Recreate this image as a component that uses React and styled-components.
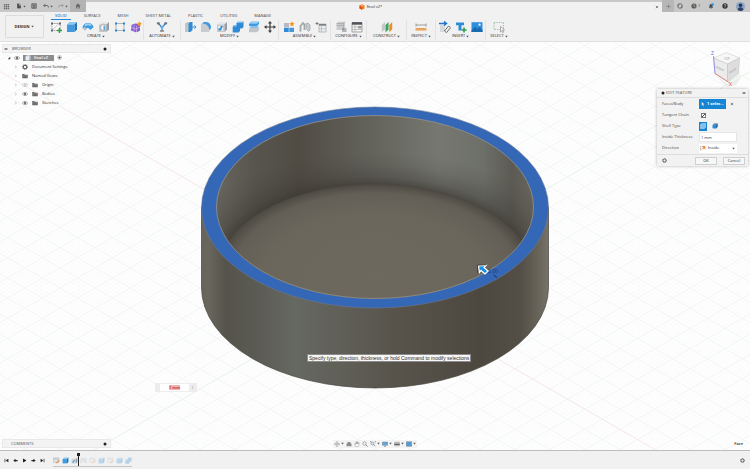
import React from 'react'
import styled, { createGlobalStyle } from 'styled-components'

const GlobalStyle = createGlobalStyle`
    * {
        box-sizing: border-box;
    }
    body {
        margin: 0;
        background: #f1f1f1;
    }
    body, button, input, select {
        font-family: "Open Sans", "Noto Sans", sans-serif;
        font-size: 4px;
        line-height: 6px;
        color: #2c2c2c;
    }
    button {
        border: 0;
        padding: 0;
        background: none;
    }
    a {
        color: inherit;
        text-decoration: none;
    }
`

/* Icons, all of them on a 12 x 12 grid */

const cubeFaces = (front, top, side) => (
    <>
        <path d="M1 3.5 3.5 1H11L8.5 3.5Z" fill={top} />
        <path d="M1 3.5H8.5V11H1Z" fill={front} />
        <path d="M8.5 3.5 11 1V8.5L8.5 11Z" fill={side} />
    </>
)
const blueCube = cubeFaces('#3f9ae0', '#8cc8f2', '#1f74ba')
const greyCube = cubeFaces('#c6cacd', '#e4e6e8', '#979da2')

const icons = {
    apps: <path d="M1.5 1.5h2.4v2.4H1.5zM4.8 1.5h2.4v2.4H4.8zM8.1 1.5h2.4v2.4H8.1zM1.5 4.8h2.4v2.4H1.5zM4.8 4.8h2.4v2.4H4.8zM8.1 4.8h2.4v2.4H8.1zM1.5 8.1h2.4v2.4H1.5zM4.8 8.1h2.4v2.4H4.8zM8.1 8.1h2.4v2.4H8.1z" fill="#6b6b6b" />,
    file: <path d="M2 1h5l3 3v7H2ZM6.5 2v3h3" fill="#4e4e4e" stroke="#ddd" strokeWidth=".4" />,
    save: <path d="M1.5 1.5h9v9h-9ZM4 1.5v3.5h4V1.5M4 10.5V7.5h4v3" fill="#aaa" stroke="#555" strokeWidth="1.5" />,
    undo: <path d="M4.5 2 1.5 5l3 3M1.5 5H8q3 0 3 4" fill="none" stroke="#555" strokeWidth="1.6" />,
    redo: <path d="M7.5 2l3 3-3 3M10.5 5H4Q1 5 1 9" fill="none" stroke="#929292" strokeWidth="1.5" />,
    home: <path d="M6 1 .8 6h1.6v5h2.4V7.5h2.4V11h2.4V6h1.6Z" fill="#666" />,
    model: <><path d="M6 .5 11 3v6L6 11.5 1 9V3Z" fill="#f27a1f" /><path d="M6 6v5.5L1 9V3Z" fill="#e04f15" /><path d="M3.5 3.5 6 2.5l2.5 1L6 5Z" fill="#ffd8b0" /></>,
    close: <path d="m2.5 2.5 7 7m0-7-7 7" stroke="#444" strokeWidth="1.7" />,
    plus: <path d="M6 1v10M1 6h10" stroke="#777" strokeWidth="1.6" />,
    refresh: <><circle cx="6" cy="6" r="4.5" fill="none" stroke="#505050" strokeWidth="1.5" /><path d="M.5 4.5h3v-3M8.5 10.5v-3h3" fill="none" stroke="#505050" /></>,
    clock: <><circle cx="6" cy="6" r="5.2" fill="#606060" /><path d="M6 2.5V6l2.5 2" fill="none" stroke="#ddd" /></>,
    bell: <><path d="M1.5 9.5 3 7.5V5q0-3 3-3t3 3v2.5l1.5 2ZM4.5 10h3l-1.5 1.5Z" fill="#474747" /><circle cx="9" cy="3" r="2.6" fill="#2391e6" /></>,
    help: <><circle cx="6" cy="6" r="5.3" fill="#333" /><path d="M4.2 4.6Q4.4 3 6 3t1.8 1.5Q7.8 5.500 6 6.3v1M6 8.3v1.2" fill="none" stroke="#eee" strokeWidth="1.2" /></>,
    avatar: <><circle cx="6" cy="6" r="6" fill="#8aa4c8" /><circle cx="6" cy="4.3" r="2.4" fill="#25344d" /><path d="M2.2 10.6Q2.5 7 6 7t3.8 3.6Q6 13.2 2.2 10.6Z" fill="#2c4165" /></>,
    sketch: <><path d="M2 2.5h8v7H2Z" fill="#fafafa" stroke="#777" strokeWidth=".7" strokeDasharray="1.5 .7" /><path d="m2 9.5 7-7" stroke="#999" strokeWidth=".6" /><path d="M1 1.5h2v2H1zM9 1.5h2v2H9zM1 8.5h2v2H1z" fill="#666" /><path d="M9.5 7v5M7 9.5h5" stroke="#29a33a" strokeWidth="1.5" /></>,
    extrude: blueCube,
    revolve: <><path d="M.5 7Q1 2 6 2t5.5 4.5L8 9Q7.5 6.5 5 7L3 9.5Z" fill="#3f9ae0" /><path d="M2 4Q6 .5 10 4L8 5Q5.5 3.5 4 5.5Z" fill="#9bd0f4" /><path d="M.5 7 3 9.5 4.5 8 3 6Z" fill="#bfc4c8" /></>,
    hole: <>{greyCube}<ellipse cx="5.5" cy="6.5" rx="3" ry="3.3" fill="#f4f4f4" stroke="#777" strokeWidth=".5" /><path d="M5.5 4.2q2 0 2 2.5t-2 2.5z" fill="#5aa8e2" /></>,
    pattern: <><path d="M2 2.5h8v7H2Z" fill="none" stroke="#8a8a8a" strokeWidth=".6" /><path d="M1 1.5h2v2H1zM9 1.5h2v2H9zM1 8.5h2v2H1zM9 8.5h2v2H9z" fill="#2586d4" /></>,
    form: <><path d="M1.500 4Q4 2 6.500 2.500L10 4.500v5Q8 11.500 5.500 11.300L1 9.500Z" fill="#8b5fd0" /><path d="M1 6.5 6 8l4-1.800M4 3.500v7M6.5 5v6" fill="none" stroke="#d9c4f5" strokeWidth=".6" /><path d="m9.5 0 .7 1.7 1.8.3-1.3 1.2.3 1.8-1.5-1L8 5l.2-1.8L7 2l1.8-.3Z" fill="#f69a22" /></>,
    automate: <><path d="M2.5 2.5 6 6.5l3.5-4M6 6.5V10" fill="none" stroke="#3b82c0" strokeWidth="1.2" /><path d="M4 10h4" stroke="#7b8790" strokeWidth="1.5" /><circle cx="2.300" cy="2.3" r="1.400" fill="#6c7a86" /><circle cx="9.7" cy="2.3" r="1.4" fill="#6c7a86" /><circle cx="6" cy="6.3" r="1.3" fill="#5bb1ee" /></>,
    pressPull: <><path d="M1 2.5 3.5 1H6v10H1Z" fill="#c1c5c8" /><path d="M4.5 2.5 6.5 1H8.5v8L6.5 11h-2Z" fill="#2f8bd6" /><path d="M8 6h4m-1.5-1.7L12 6l-1.5 1.7" fill="none" stroke="#2f8bd6" strokeWidth=".9" /></>,
    fillet: <><path d="M1 3 3.5 1H6q5 .5 5 6l-2 4H1Z" fill="#c8ccd0" /><path d="M2.5 2.5 4 1h2q5 .5 5 6L9.2 9Q9 3 2.5 2.5Z" fill="#3f9ae0" /></>,
    shell: <>{greyCube}<path d="M2.5 5H7v4.5H2.5Z" fill="#f5f5f5" /><path d="M2.5 9.5V7.3h2V5H7L5 9.5Z" fill="#2f8bd6" /></>,
    combine: <><path d="M4.5 2 6 .7h5.5V6L10 7.5H8v2.5L6.5 11.5H.7V5.5L2 4.3h2.5Z" fill="#2f8bd6" /><path d="M4.5 2 6 .7h5.5L10 2ZM.7 5.5 2 4.3h2.5v1.2Z" fill="#84c3f1" /></>,
    split: <><path d="M1 2.8 3 .8h8v2.200L9 5H1Z" fill="#3f9ae0" /><path d="M1 2.8 3 .8h8L9 2.8Z" fill="#93ccf4" /><path d="M1 8 3 6.500h8V9L9 11.3H1Z" fill="#c0c5c9" /><path d="m1 6.8 2-1.500h8L9 6.800Z" fill="#6db4e9" /></>,
    move: <path d="M6 0 8 2.5H6.6v2.9h2.9V4L12 6 9.5 8V6.6H6.6v2.9H8L6 12 4 9.5h1.4V6.6H2.5V8L0 6l2.5-2v1.4h2.9V2.5H4Z" fill="#3f3f3f" />,
    component: <><path d="M1 2h5v4.500H1z" fill="#b4bac0" /><path d="M1 6.500h5V11H1z" fill="#2f8bd6" /><path d="M6 6.500h5V11H6z" fill="#4797d8" /><path d="M6 6.500V11M1 6.500h10" stroke="#d8ebf8" strokeWidth=".6" /><path d="m9 .3.8 1.7 1.9.3-1.4 1.2.3 1.8-1.6-.9-1.6.9.3-1.8-1.4-1.2 1.9-.3Z" fill="#f68f1e" /></>,
    joint: <><path d="M1.500 10.5V5L4 2l1.500 1.500V9" fill="none" stroke="#a1a7ab" strokeWidth="1.8" /><path d="M7 2.500V7l2.500 3.500L11 9V4L9 2Z" fill="#c4c8cb" stroke="#a4a9ad" strokeWidth=".8" /></>,
    align: <><path d="M.5 2.5h3M2 1v3" stroke="#666" strokeWidth=".8" /><path d="M4 3h7v8H4Z" fill="#eceeef" stroke="#999" strokeWidth=".6" /><path d="M4 3h7v1.7H4z" fill="#7a8288" /><path d="M6.5 5v6M4 7.8h7" stroke="#aaa" strokeWidth=".6" /></>,
    configure: <><path d="M1.5 2.500 3 .7h7V7L8.500 9h-7Z" fill="#c8ccce" /><path d="M1.5 4.500h7M8.500 2.500V9M1.500 2.500h7L10 .7" fill="none" stroke="#9a9fa3" strokeWidth=".6" /><path d="M7 8h4.5M7 10h4.5" stroke="#737a80" /></>,
    table: <><path d="M1 1.5h10v9.5H1Z" fill="#f3f3f3" stroke="#858585" strokeWidth=".7" /><path d="M1 1.2h10v2.5H1z" fill="#505458" /><path d="M1 6h10M1 8.5h10M4 4v7" stroke="#a5a5a5" strokeWidth=".6" /><path d="M7 5h3.5v2.5H7z" fill="#9a9fa3" /></>,
    construct: <><path d="M.8 4 4 1v7.5L.8 11Z" fill="#c3c7ca" /><path d="M4.5 4 7.5 1v7.5l-3 3Z" fill="#3aa35a" /><path d="m8.2 4 3-3v7.5l-3 2.8Z" fill="#ef8f2d" /></>,
    inspect: <><path d="M1 2.500v3M11 2.500v3M1 4h10" stroke="#8a8a8a" strokeWidth=".8" /><path d="M.5 7h11v2.600H.5z" fill="#eeaa65" /><path d="M2.5 7v1.200M4.5 7v1.200M6.5 7v1.200M8.5 7v1.200" stroke="#b7712b" strokeWidth=".4" /></>,
    insert: <><path d="M1 4h5v7H1Z" fill="#d6d9db" /><path d="M0 2.5h7M5 .5l2.5 2L5 4.5" fill="none" stroke="#2378c8" strokeWidth="1.5" /><path d="m5.5 10 4-5 2 1.7-4 5Z" fill="none" stroke="#6c7074" strokeWidth="1" /></>,
    insertMesh: <><path d="M1 1.5h8v2.7H6.5V9.5h-3V4.2H1Z" fill="#2f8bd6" /><path d="M9 6.5v5M6.5 9h5" stroke="#28a049" strokeWidth="1.6" /></>,
    image: <><path d="M.5 1.2h11v9.8H.5Z" fill="#2f8fdd" /><path d="m.5 9.5 3.5-4 2.5 2.5L8.5 6l3 3v2H.5Z" fill="#1a6bb0" /><circle cx="8.6" cy="3.7" r="1.1" fill="#fff" /></>,
    select: <><path d="M1 1.5h9.500v7H1Z" fill="none" stroke="#8fbfa0" strokeWidth=".9" strokeDasharray="1.4 1" /><path d="m7.5 5.5 4 3.5-1.8.2.9 2-1 .4-.8-2-1.3 1.2Z" fill="#fff" stroke="#777" strokeWidth=".6" /></>,
    collapse: <path d="M1 6h10M4 3.5v5M8 3.5v5" stroke="#555" strokeWidth="2" />,
    dot: <circle cx="6" cy="6" r="4.5" fill="#222" />,
    open: <path d="M9.5 2.5v7h-7Z" fill="#333" />,
    closed: <path d="m4 2.5 4.5 3.5L4 9.5Z" fill="#fff" stroke="#aaa" strokeWidth="1.1" />,
    eye: <><path d="M.5 6Q6-.5 11.5 6 6 12.5.5 6Z" fill="#fff" stroke="#6d6d6d" strokeWidth="1.2" /><circle cx="6" cy="6" r="2.2" fill="#555" /></>,
    eyeOff: <><path d="M.5 6Q6-.5 11.5 6 6 12.5.5 6Z" fill="#fff" stroke="#aaa" strokeWidth="1.2" /><circle cx="6" cy="6" r="1.8" fill="#bbb" /></>,
    folder: <><path d="M.5 2h4l1 1.5h6V10.5H.5Z" fill="#666" /><path d="M.5 5h11M3.5 5v5.5M8.5 5v5.5" stroke="#aaa" strokeWidth=".6" /></>,
    gear: <><circle cx="6" cy="6" r="3.6" fill="none" stroke="#555" strokeWidth="2.2" /><circle cx="6" cy="6" r="5" fill="none" stroke="#555" strokeWidth="1.5" strokeDasharray="2 1.93" /></>,
    part: cubeFaces('#e9edf2', '#fff', '#c4d2e2'),
    target: <><circle cx="6" cy="6" r="5" fill="#fff" stroke="#888" /><circle cx="6" cy="6" r="2.7" fill="#444" /></>,
    cursor: <path d="m3 1 6.5 6-2.5.2 1.5 3-1.5.8-1.5-3L3 10Z" fill="#e6f4ff" stroke="#174f7a" strokeWidth=".6" />,
    shellSharp: <><path d="M1 3.5 3.5 1H11v7.5L8.5 11H1Z" fill="#4fa9e6" stroke="#fff" strokeWidth=".8" /><path d="M1 3.5h7.5V11M8.5 3.5 11 1M3 5.5h3.5V9H3Z" fill="none" stroke="#fff" strokeWidth=".7" /></>,
    shellRound: <><path d="M1 5q0-2 2-3l1-1h7v6.5L8.5 11H3q-2 0-2-2Z" fill="#2f8bd6" /><path d="M4 1h7L9 3.5H2Z" fill="#7e9db7" /><path d="M8.5 3.5 11 1v6.5L8.5 11Z" fill="#245c8d" /></>,
    direction: <><path d="M1 11V3h2" fill="none" stroke="#777" strokeWidth=".9" /><path d="m1.5 10.5 5-5M4 2.5l6 .2.5 6-2.2-2.5-2.3 2-.8-.8 2.2-2Z" fill="#ee8030" stroke="#ee8030" strokeWidth=".9" /></>,
    orbit: <path d="M6 1v10M1 6h10M4 3l2-2 2 2M4 9l2 2 2-2M3 4 1 6l2 2M9 4l2 2-2 2" fill="none" stroke="#777" strokeWidth=".9" />,
    look: <path d="M3 2h6v3h2v5.500H1V5h2Z" fill="#8c8c8c" />,
    hand: <path d="M3 11 1 6.5l1-.5 1.5 1.5V2.5h1.2V6l.4-4.5h1.2V6l.7-4h1.1l-.3 4.3L9.3 3.5h1L9.5 9 8.5 11Z" fill="#fff" stroke="#777" strokeWidth=".7" />,
    zoom: <><circle cx="5" cy="5" r="3.3" fill="#f1f6fb" stroke="#666" /><path d="m7.5 7.5 3.5 3.5" stroke="#666" strokeWidth="1.5" /></>,
    zoomFit: <><circle cx="5" cy="5" r="3" fill="#d7e9f8" stroke="#666" /><path d="m7.5 7.5 3 3M.5 2.5v-2h2M10 .5h1.5V3" fill="none" stroke="#666" strokeWidth="1.2" /></>,
    display: <><path d="M.5 2h11v6.5H.5Z" fill="#62a8dd" stroke="#6c7780" strokeWidth=".8" /><path d="M4 10.5h4" stroke="#777" strokeWidth="1.5" /></>,
    layout: <><path d="M.5 1.5h11v9H.5Z" fill="#bbb" /><path d="M.5 5.5h11v2.5H.5Z" fill="#666" /></>,
    viewports: <path d="M.5 1.5h11v9H.5Z" fill="#5b9bd3" stroke="#5e7488" strokeWidth=".8" />,
    toStart: <path d="M10.5 2v8L4 6ZM1.5 2h1.6v8H1.5Z" fill="#222" />,
    stepBack: <path d="M6 2v8L.8 6ZM6 4.5h5v3H6Z" fill="#222" />,
    play: <path d="m2.5 1 8 5-8 5Z" fill="#111" />,
    stepOn: <path d="M6 2v8l5.2-4ZM1 4.5h5v3H1Z" fill="#222" />,
    toEnd: <path d="M1.5 2v8L8 6ZM8.9 2h1.6v8H8.9Z" fill="#222" />,
    tlSketch: <><path d="M1 1.5h9v8H1Z" fill="#e4e4e4" stroke="#999" strokeWidth=".6" /><path d="M1.5 3.5h8" stroke="#8dbbdf" strokeWidth="1.2" /><path d="m5 10 5-5.5 1.5 1.3-5 5.5Z" fill="#ef8d3d" /></>,
}

const Glyph = styled.svg`
    display: block;
    flex: none;
    width: ${({ $size }) => $size}px;
    height: ${({ $size }) => $size}px;
    opacity: ${({ $faded }) => ($faded ? 0.3 : 1)};
`

const Icon = ({ name, size = 6, faded }) => (
    <Glyph viewBox="0 0 12 12" $size={size} $faded={faded} aria-hidden="true">
        {icons[name]}
    </Glyph>
)

const Caret = () => (
    <Glyph viewBox="0 0 12 12" $size={3} aria-hidden="true">
        <path d="M1 3h10L6 10Z" fill="#555" />
    </Glyph>
)

/* Title bar */

const TitleBar = () => (
    <TitleWrapper>
        <QuickAccess>
            <IconButton aria-label="Data panel"><Icon name="apps" size={7} /></IconButton>
            <IconButton aria-label="File"><Icon name="file" /><Caret /></IconButton>
            <IconButton aria-label="Save"><Icon name="save" /></IconButton>
            <IconButton aria-label="Undo"><Icon name="undo" /><Caret /></IconButton>
            <IconButton aria-label="Redo"><Icon name="redo" /><Caret /></IconButton>
        </QuickAccess>
        <HomeTab aria-label="Home"><Icon name="home" /></HomeTab>
        <DocumentTab>
            <DocumentName><Icon name="model" />final v2*</DocumentName>
            <IconButton aria-label="Close"><Icon name="close" size={4} /></IconButton>
        </DocumentTab>
        <NewTab aria-label="New design"><Icon name="plus" size={5} /></NewTab>
        <Account>
            <IconButton aria-label="Extensions"><Icon name="refresh" /></IconButton>
            <IconButton aria-label="Job status"><Icon name="clock" />1</IconButton>
            <IconButton aria-label="Notifications"><Icon name="bell" /></IconButton>
            <IconButton aria-label="Help"><Icon name="help" /></IconButton>
            <IconButton aria-label="Profile"><Icon name="avatar" size={9} /></IconButton>
        </Account>
    </TitleWrapper>
)

/* Toolbar */

const tabs = ['SOLID', 'SURFACE', 'MESH', 'SHEET METAL', 'PLASTIC', 'UTILITIES', 'MANAGE']

const groups = [
    { label: 'CREATE', width: 94, tools: ['sketch', 'extrude', 'revolve', 'hole', 'pattern', 'form'] },
    { label: 'AUTOMATE', width: 37, tools: ['automate'] },
    { label: 'MODIFY', width: 98, tools: ['pressPull', 'fillet', 'shell', 'combine', 'split', 'move'] },
    { label: 'ASSEMBLE', width: 52, tools: ['component', 'joint', 'align'] },
    { label: 'CONFIGURE', width: 36, tools: ['configure', 'table'] },
    { label: 'CONSTRUCT', width: 40, tools: ['construct'] },
    { label: 'INSPECT', width: 29, tools: ['inspect'] },
    { label: 'INSERT', width: 50, tools: ['insert', 'insertMesh', 'image'] },
    { label: 'SELECT', width: 27, tools: ['select'] },
]

const Toolbar = () => (
    <ToolbarWrapper>
        <WorkspaceButton>DESIGN<Caret /></WorkspaceButton>
        <div>
            <Tabs>
                {tabs.map((tab, index) => (
                    <Tab key={tab} href="#" $active={index === 0}>{tab}</Tab>
                ))}
            </Tabs>
            <Groups>
                {groups.map((group) => (
                    <Group key={group.label} $width={group.width}>
                        <Tools>
                            {group.tools.map((tool) => (
                                <IconButton key={tool} aria-label={tool}><Icon name={tool} size={12} /></IconButton>
                            ))}
                        </Tools>
                        <GroupLabel>{group.label}<Caret /></GroupLabel>
                    </Group>
                ))}
            </Groups>
        </div>
    </ToolbarWrapper>
)

/* Canvas */

const Scene = () => (
    <SceneSvg viewBox="0 42 750 408" preserveAspectRatio="xMidYMin slice" aria-hidden="true">
        <defs>
            <pattern id="minor" x="375" y="288" width="7" height="4.04" patternUnits="userSpaceOnUse">
                <path d="M0 0 7 4.04M0 4.04 7 0" stroke="#f7f8f8" strokeWidth=".4" />
            </pattern>
            <pattern id="major" x="375" y="288" width="35" height="20.2" patternUnits="userSpaceOnUse">
                <path d="M0 0 35 20.2M0 20.2 35 0" stroke="#f0f1f1" strokeWidth=".7" />
            </pattern>
            <linearGradient id="outer">
                <stop offset="0" stopColor="#67645b" />
                <stop offset=".02" stopColor="#69665d" />
                <stop offset=".07" stopColor="#55534b" />
                <stop offset=".16" stopColor="#5b5b54" />
                <stop offset=".27" stopColor="#666862" />
                <stop offset=".4" stopColor="#605f58" />
                <stop offset=".55" stopColor="#58544c" />
                <stop offset=".8" stopColor="#4d483f" />
                <stop offset=".92" stopColor="#544f46" />
                <stop offset=".98" stopColor="#6c685e" />
                <stop offset="1" stopColor="#77736a" />
            </linearGradient>
            <linearGradient id="inner">
                <stop offset="0" stopColor="#67665e" />
                <stop offset=".12" stopColor="#57554e" />
                <stop offset=".26" stopColor="#504c44" />
                <stop offset=".45" stopColor="#605f58" />
                <stop offset=".7" stopColor="#767870" />
                <stop offset=".84" stopColor="#6d6f69" />
                <stop offset=".93" stopColor="#5c5b53" />
                <stop offset="1" stopColor="#67645b" />
            </linearGradient>
            <radialGradient id="innerShade">
                <stop offset=".74" stopColor="#38352f" stopOpacity=".65" />
                <stop offset=".8" stopColor="#38352f" stopOpacity=".35" />
                <stop offset=".9" stopColor="#38352f" stopOpacity=".12" />
                <stop offset="1" stopColor="#38352f" stopOpacity="0" />
            </radialGradient>
            <radialGradient id="floor">
                <stop offset="0" stopColor="#6e695f" />
                <stop offset=".7" stopColor="#6b665c" />
                <stop offset=".9" stopColor="#635f56" />
                <stop offset="1" stopColor="#4d4a43" />
            </radialGradient>
            <clipPath id="opening">
                <ellipse cx="375" cy="207" rx="158.5" ry="91.5" />
            </clipPath>
        </defs>
        <rect y="42" width="750" height="408" fill="#fefefe" />
        <rect y="42" width="750" height="408" fill="url(#minor)" />
        <rect y="42" width="750" height="408" fill="url(#major)" />
        <path d="M-30 54.2 660 452.5" stroke="#fbe4e4" strokeWidth=".8" />
        <path d="M90 452.5 801 42" stroke="#e6f5e6" strokeWidth=".8" />
        <path d="M201.5 207.5V287.5A173.5 100.5 0 0 0 548.5 287.5V207.5Z" fill="url(#outer)" stroke="#45423b" strokeWidth=".7" />
        <ellipse cx="375" cy="207.5" rx="173.5" ry="100.5" fill="#3467b5" stroke="#6c7892" strokeWidth=".6" />
        <g clipPath="url(#opening)">
            <rect x="216" y="115" width="318" height="184" fill="url(#inner)" />
            <ellipse cx="375" cy="275.5" rx="214" ry="123.5" fill="url(#innerShade)" />
            <ellipse cx="375" cy="275.5" rx="158.5" ry="91.5" fill="url(#floor)" stroke="#4a4740" strokeWidth=".4" />
        </g>
        <ellipse cx="375" cy="207" rx="158.5" ry="91.5" fill="none" stroke="#a39a88" strokeWidth=".7" />
        <text x="488" y="273" fontSize="5" fill="#1c3c78">2.00</text>
        <path d="m493.5 275 3.5 2.5" stroke="#152f61" strokeWidth="1" />
        <path d="m478.500 266 7.500-.5-2 2 4 3.500-3 3-4-3.500-1.500 2Z" fill="#1a8de2" stroke="#fff" strokeWidth="1.2" />
        <path d="M477.500 272.500V265H486" fill="none" stroke="#222" strokeWidth=".5" />
    </SceneSvg>
)

const tree = [
    { label: 'Document Settings', icons: ['gear'] },
    { label: 'Named Views', icons: ['folder'] },
    { label: 'Origin', icons: ['eyeOff', 'folder'] },
    { label: 'Bodies', icons: ['eye', 'folder'] },
    { label: 'Sketches', icons: ['eye', 'folder'] },
]

const Browser = () => (
    <div>
        <PanelBar>
            <Icon name="collapse" size={4} />
            <PanelTitle>BROWSER</PanelTitle>
            <Icon name="dot" size={4} />
        </PanelBar>
        <TreeRow $root>
            <Icon name="open" size={4} />
            <Icon name="eye" />
            <RootLabel><Icon name="part" />final v2</RootLabel>
            <Icon name="target" size={5} />
        </TreeRow>
        {tree.map((item) => (
            <TreeRow key={item.label}>
                <Icon name="closed" size={4} />
                {item.icons.map((icon) => <Icon key={icon} name={icon} />)}
                <span>{item.label}</span>
            </TreeRow>
        ))}
    </div>
)

const ViewCube = () => (
    <CubeSvg viewBox="706 48 40 40" role="img" aria-label="View cube">
        <path d="m715 75 13 9 14-8-6 9-9 2Z" fill="#ededed" />
        <path d="m713.5 58 13-5.5 13 5.5-12 6Z" fill="#f7f7f7" stroke="#ccc" strokeWidth=".6" />
        <path d="m713.5 58 14 6v17.5L715 73.5Z" fill="#ececec" stroke="#c5c5c5" strokeWidth=".6" />
        <path d="m727.5 64 12-6-1 15.5-11 8Z" fill="#dedede" stroke="#c5c5c5" strokeWidth=".6" />
        <path d="M713.5 56 715 73.5" stroke="#8482e8" strokeWidth=".8" />
        <path d="m715 73.5 14 9" stroke="#e26b6b" strokeWidth=".8" />
        <path d="m728 82 12-7" stroke="#b6e0b6" strokeWidth=".6" />
        <text x="711" y="55" fontSize="5" fill="#5b5be6">Z</text>
        <text x="729" y="86" fontSize="5" fill="#ee4444">X</text>
        <text transform="matrix(.9 .38 0 1 715.5 68)" fontSize="3" fill="#888">FRONT</text>
        <text transform="matrix(.85 -.5 0 1 729 74)" fontSize="3" fill="#888">RIGHT</text>
        <text x="724" y="60" fontSize="3" fill="#999">TOP</text>
    </CubeSvg>
)

const EditFeature = () => {
    const [tangent, setTangent] = React.useState(true)
    const [shellType, setShellType] = React.useState('shellSharp')
    const [thickness, setThickness] = React.useState('1 mm')
    const [direction, setDirection] = React.useState('Inside')

    return (
        <Dialog aria-label="Edit feature">
            <DialogHeader>
                <Icon name="dot" size={4} />
                <PanelTitle>EDIT FEATURE</PanelTitle>
                <Icon name="collapse" size={4} />
            </DialogHeader>
            <Fields>
                <Field>
                    <FieldLabel>Faces/Body</FieldLabel>
                    <SelectionButton><Icon name="cursor" />1 selec...</SelectionButton>
                    <IconButton aria-label="Clear selection"><Icon name="close" size={4} /></IconButton>
                </Field>
                <Field>
                    <FieldLabel as="label" htmlFor="tangent">Tangent Chain</FieldLabel>
                    <Tick id="tangent" type="checkbox" checked={tangent} onChange={(event) => setTangent(event.target.checked)} />
                </Field>
                <Field role="radiogroup" aria-label="Shell Type">
                    <FieldLabel>Shell Type</FieldLabel>
                    {['shellSharp', 'shellRound'].map((type) => (
                        <ShellOption key={type} $active={type === shellType}>
                            <input
                                type="radio"
                                name="shell"
                                aria-label={type}
                                checked={type === shellType}
                                onChange={() => setShellType(type)}
                            />
                            <Icon name={type} />
                        </ShellOption>
                    ))}
                </Field>
                <Field>
                    <FieldLabel as="label" htmlFor="thickness">Inside Thickness</FieldLabel>
                    <TextBox id="thickness" value={thickness} onChange={(event) => setThickness(event.target.value)} />
                </Field>
                <Field>
                    <FieldLabel as="label" htmlFor="direction">Direction</FieldLabel>
                    <SelectBox>
                        <Icon name="direction" />
                        <select id="direction" value={direction} onChange={(event) => setDirection(event.target.value)}>
                            <option>Inside</option>
                            <option>Outside</option>
                            <option>Both</option>
                        </select>
                        <Caret />
                    </SelectBox>
                </Field>
            </Fields>
            <DialogFooter>
                <IconButton aria-label="Settings"><Icon name="gear" size={5} /></IconButton>
                <DialogButton>OK</DialogButton>
                <DialogButton>Cancel</DialogButton>
            </DialogFooter>
        </Dialog>
    )
}

const navTools = [
    { name: 'orbit', menu: true },
    { name: 'look' },
    { name: 'hand' },
    { name: 'zoom' },
    { name: 'zoomFit', menu: true },
    { name: 'display', menu: true },
    { name: 'layout', menu: true },
    { name: 'viewports', menu: true },
]

const playback = ['toStart', 'stepBack', 'play', 'stepOn', 'toEnd']
const features = ['tlSketch', 'extrude', 'shell', 'joint', 'tlSketch', 'extrude', 'tlSketch', 'extrude', 'combine']

const App = () => (
    <Page>
        <GlobalStyle />
        <TitleBar />
        <Toolbar />
        <Canvas>
            <Scene />
            <CanvasTop>
                <Browser />
                <RightColumn>
                    <ViewCube />
                    <EditFeature />
                </RightColumn>
            </CanvasTop>
            <Hint role="tooltip">Specify type, direction, thickness, or hold Command to modify selections</Hint>
            <Dimension>
                <DimensionInput aria-label="Thickness" defaultValue="1 mm" />
                <IconButton aria-label="More">⁝</IconButton>
            </Dimension>
            <CanvasBottom>
                <PanelBar>
                    <PanelTitle $indent>COMMENTS</PanelTitle>
                    <Icon name="dot" size={4} />
                </PanelBar>
                <NavBar>
                    {navTools.map((tool) => (
                        <IconButton key={tool.name} aria-label={tool.name}>
                            <Icon name={tool.name} />
                            {tool.menu && <Caret />}
                        </IconButton>
                    ))}
                </NavBar>
                <Status>Face</Status>
            </CanvasBottom>
        </Canvas>
        <Timeline>
            <Playback>
                {playback.map((name) => (
                    <IconButton key={name} aria-label={name}><Icon name={name} size={5} /></IconButton>
                ))}
            </Playback>
            <Features>
                {features.map((name, index) => (
                    <Feature key={index} $marker={index === 2}>
                        <Icon name={name} faded={index > 2} size={7} />
                    </Feature>
                ))}
            </Features>
            <IconButton aria-label="Timeline settings"><Icon name="gear" size={5} /></IconButton>
        </Timeline>
    </Page>
)

const Page = styled.div`
    display: flex;
    flex-direction: column;
    min-height: 100vh;
`
const IconButton = styled.button`
    display: flex;
    align-items: center;
    gap: 1px;
    flex: none;
`
const TitleWrapper = styled.header`
    display: flex;
    height: 12px;
    background: #c8c8c8;
`
const QuickAccess = styled.div`
    display: flex;
    align-items: center;
    justify-content: space-between;
    width: 70px;
    padding: 0 2px 0 3px;
`
const HomeTab = styled.button`
    display: flex;
    align-items: center;
    justify-content: center;
    width: 16px;
    background: #b3b3b3;
`
const DocumentTab = styled.div`
    display: flex;
    flex: 1;
    align-items: center;
    margin-top: 2px;
    padding-right: 3px;
    background: #f1f1f1;
`
const DocumentName = styled.div`
    display: flex;
    flex: 1;
    align-items: center;
    justify-content: center;
    gap: 2px;
`
const NewTab = styled.button`
    display: flex;
    align-items: center;
    justify-content: center;
    width: 12px;
    background: #b7b7b7;
`
const Account = styled.div`
    display: flex;
    align-items: center;
    justify-content: space-between;
    width: 76px;
    padding: 0 5px 0 3px;
`
const ToolbarWrapper = styled.div`
    display: flex;
    height: 30px;
    gap: 5px;
    padding-left: 5px;
    background: #f1f1f1;
    border-bottom: 1px solid #e0e0e0;
`
const WorkspaceButton = styled.button`
    display: flex;
    align-items: center;
    justify-content: center;
    gap: 2px;
    width: 39px;
    height: 23px;
    margin-top: 3px;
    border: 1px solid #dcdcdc;
    border-radius: 1px;
    font-weight: 700;
`
const Tabs = styled.nav`
    display: flex;
    gap: 9px;
    height: 8px;
    padding-left: 2px;
`
const Tab = styled.a`
    height: 8px;
    padding: 1px 4px 0;
    border-bottom: 1px solid ${({ $active }) => ($active ? '#1b87d6' : 'transparent')};
    color: ${({ $active }) => ($active ? '#1b87d6' : '#444')};
    font-weight: ${({ $active }) => ($active ? 600 : 400)};
`
const Groups = styled.div`
    display: flex;
`
const Group = styled.div`
    display: flex;
    flex-direction: column;
    align-items: center;
    width: ${({ $width }) => $width}px;
    height: 20px;
    & + & {
        border-left: 1px solid #e2e2e2;
    }
`
const Tools = styled.div`
    display: flex;
    gap: 4px;
    padding-top: 1px;
`
const GroupLabel = styled.button`
    display: flex;
    align-items: center;
    gap: 1px;
`
const Canvas = styled.main`
    position: relative;
    display: flex;
    flex: 1;
    flex-direction: column;
    justify-content: space-between;
    overflow: hidden;
    padding: 2px;
`
const SceneSvg = styled.svg`
    position: absolute;
    inset: 0;
    width: 100%;
    height: 100%;
`
const CanvasTop = styled.div`
    position: relative;
    display: flex;
    justify-content: space-between;
`
const PanelBar = styled.div`
    display: flex;
    align-items: center;
    width: 109px;
    height: 9px;
    padding: 0 3px 0 1px;
    gap: 4px;
    background: #f3f3f3;
    border: 1px solid #e8e8e8;
`
const PanelTitle = styled.span`
    flex: 1;
    padding-left: ${({ $indent }) => ($indent ? 7 : 0)}px;
    color: #555;
`
const TreeRow = styled.div`
    display: flex;
    align-items: center;
    gap: ${({ $root }) => ($root ? 3 : 4)}px;
    height: 9px;
    padding-left: ${({ $root }) => ($root ? 5 : 12)}px;
    span {
        padding-right: 3px;
        background: #fafafa;
    }
`
const RootLabel = styled.div`
    display: flex;
    align-items: center;
    gap: 3px;
    width: 31px;
    padding-left: 2px;
    background: #8d8d8d;
    color: #fff;
    font-weight: 600;
`
const RightColumn = styled.div`
    display: flex;
    flex-direction: column;
    align-items: flex-end;
    gap: 1px;
    padding-top: 4px;
`
const CubeSvg = styled.svg`
    width: 40px;
    height: 40px;
    margin-right: 2px;
`
const Dialog = styled.section`
    width: 91px;
    background: #f2f2f2;
    box-shadow: 0 0 3px rgba(0, 0, 0, .3);
`
const DialogHeader = styled.div`
    display: flex;
    align-items: center;
    gap: 1px;
    height: 9px;
    padding: 0 2px 0 4px;
    border-bottom: 1px solid #dedede;
`
const Fields = styled.div`
    display: grid;
    gap: 1px;
    padding: 1px 2px 1px 5px;
`
const Field = styled.div`
    display: flex;
    align-items: center;
    gap: 4px;
    height: 10px;
`
const FieldLabel = styled.span`
    width: 33px;
    white-space: nowrap;
    color: #484848;
`
const SelectionButton = styled.button`
    display: flex;
    align-items: center;
    gap: 1px;
    width: 27px;
    height: 10px;
    padding-left: 1px;
    background: #1685d3;
    color: #fff;
    font-weight: 700;
`
const Tick = styled.input`
    appearance: none;
    width: 5px;
    height: 5px;
    margin: 0 0 0 2px;
    border: 1px solid #777;
    background: #fff;
    &:checked {
        background: linear-gradient(135deg, #fff 40%, #444 40%, #444 65%, #fff 65%);
    }
`
const ShellOption = styled.label`
    display: flex;
    align-items: center;
    justify-content: center;
    width: 8px;
    height: 9px;
    background: ${({ $active }) => ($active ? '#1685d3' : 'transparent')};
    input {
        appearance: none;
        width: 0;
        height: 0;
        margin: 0;
    }
`
const TextBox = styled.input`
    width: 38px;
    height: 10px;
    padding: 0 1px;
    border: 1px solid #e6e6e6;
    background: #fff;
`
const SelectBox = styled.div`
    display: flex;
    align-items: center;
    gap: 2px;
    width: 38px;
    height: 9px;
    padding: 0 2px 0 1px;
    background: #fff;
    select {
        flex: 1;
        min-width: 0;
        height: 6px;
        padding: 0;
        border: 0;
        appearance: none;
        background: none;
    }
`
const DialogFooter = styled.div`
    display: flex;
    align-items: center;
    gap: 6px;
    height: 12px;
    padding: 0 3px 0 5px;
    border-top: 1px solid #dedede;
    button:first-child {
        margin-right: auto;
    }
`
const DialogButton = styled.button`
    width: 22px;
    height: 8px;
    border: 1px solid #cfcfcf;
    background: #f7f7f7;
`
const Hint = styled.div`
    position: absolute;
    top: 312px;
    left: calc(50% - 68px);
    padding: 0 1px;
    border: 1px solid #8b8b8b;
    background: #f7f7f7;
    font-family: "Liberation Sans", Arial, sans-serif;
    font-size: 5px;
    white-space: nowrap;
`
const Dimension = styled.div`
    position: absolute;
    top: 341px;
    left: calc(50% - 220px);
    display: flex;
    align-items: center;
    gap: 3px;
    width: 42px;
    height: 9px;
    padding-left: 5px;
    background: #ededed;
`
const DimensionInput = styled.input`
    width: 29px;
    height: 7px;
    padding: 0;
    border: 0;
    background: linear-gradient(#f1b1b1, #f1b1b1) center / 11px 5px no-repeat #fff;
    color: #b91f2b;
    font-weight: 600;
    text-align: center;
`
const CanvasBottom = styled.div`
    position: relative;
    display: grid;
    grid-template-columns: 1fr auto 1fr;
    align-items: center;
`
const NavBar = styled.div`
    display: flex;
    gap: 2px;
    padding: 1px;
    background: #f4f4f4;
`
const Status = styled.span`
    justify-self: end;
    padding-right: 5px;
    font-weight: 600;
`
const Timeline = styled.footer`
    display: flex;
    align-items: center;
    height: 19px;
    padding: 0 5px 0 4px;
    border-top: 1px solid #bdbdbd;
    background: #f1f1f1;
    & > button {
        margin-left: auto;
    }
`
const Playback = styled.div`
    display: flex;
    gap: 4px;
`
const Features = styled.div`
    display: flex;
    gap: 2px;
    margin-left: 8px;
    padding: 3px 0 2px;
    border-bottom: 1px solid #c6c6c6;
`
const Feature = styled.div`
    position: relative;
    &::after {
        content: "";
        display: ${({ $marker }) => ($marker ? 'block' : 'none')};
        position: absolute;
        top: -4px;
        right: -2px;
        width: 3px;
        height: 13px;
        background: linear-gradient(#222, #222) center / 1px 100% no-repeat, linear-gradient(#222, #222) top / 3px 3px no-repeat;
    }
`

export default App
